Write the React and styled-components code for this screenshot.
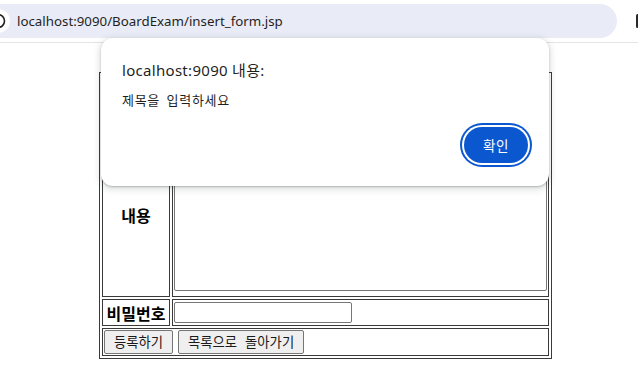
import React from "react";
import styled, { createGlobalStyle } from "styled-components";

const GlobalStyle = createGlobalStyle`
  body {
    margin: 0;
    background: #fff;
    font-family: "Noto Sans", "Noto Sans CJK KR", sans-serif;
    overflow: hidden;
  }
`;

const Shell = styled.div`
  position: relative;
  width: 638px;
  height: 385px;
  overflow: hidden;
`;

const Toolbar = styled.div`
  height: 42px;
  border-bottom: 1px solid #e2e4e8;
  display: flex;
  align-items: center;
  justify-content: space-between;
`;

const Omnibox = styled.div`
  margin-left: -22px;
  width: 639px;
  height: 34px;
  border-radius: 17px;
  background: #e9ecf6;
  display: flex;
  align-items: center;
  padding-left: 8px;
  box-sizing: border-box;
`;

const SiteChip = styled.div`
  width: 24px;
  height: 24px;
  border-radius: 50%;
  background: #fff;
  display: flex;
  align-items: center;
  justify-content: center;
  flex-shrink: 0;
`;

const Url = styled.span`
  margin-left: 7px;
  font-size: 13.3px;
  color: #1f1f1f;
  letter-spacing: 0;
  white-space: nowrap;
`;

const EdgeIcon = styled.div`
  width: 16px;
  height: 16px;
  margin-right: -13px;
  display: flex;
`;

const Page = styled.div`
  padding: 29px 0 0 99px;
`;

const FormTable = styled.div`
  display: grid;
  grid-template-columns: 68px 377px;
  grid-template-rows: 27px 27px 164px 27px 28px;
  gap: 2px;
  padding: 2px;
  width: max-content;
  border: 1px solid #3a3a3a;
  font-family: "Noto Sans CJK KR", sans-serif;
`;

const Cell = styled.div`
  box-sizing: border-box;
  border: 1px solid #3a3a3a;
  padding: 1px;
  display: flex;
  align-items: ${(p) => (p.$top ? "flex-start" : "center")};
  justify-content: ${(p) => (p.$label ? "center" : "flex-start")};
  grid-column: ${(p) => (p.$span ? "1 / span 2" : "auto")};
  gap: 5px;
  font-weight: ${(p) => (p.$label ? 700 : 400)};
  font-size: 16px;
  color: #000;
  white-space: nowrap;
`;

const TextInput = styled.input`
  box-sizing: border-box;
  width: 178px;
  height: 21px;
  border: 1px solid #767676;
  border-radius: 2px;
  padding: 1px 2px;
  background: #fff;
`;

const TextArea = styled.textarea`
  box-sizing: border-box;
  width: 374px;
  height: 156px;
  border: 1px solid #767676;
  border-radius: 2px;
  resize: none;
  margin: 0;
`;

const PlainButton = styled.button`
  box-sizing: border-box;
  height: 24px;
  padding: 0 9px;
  border: 1px solid #767676;
  border-radius: 2px;
  background: #efefef;
  color: #1a1a1a;
  font-family: "Noto Sans CJK KR", sans-serif;
  font-size: 13.33px;
  word-spacing: 5px;
  line-height: 1;
`;

const Dialog = styled.div`
  position: absolute;
  top: 38px;
  left: 101px;
  width: 448px;
  height: 148px;
  box-sizing: border-box;
  padding: 22px 21px 23px 21px;
  background: #fff;
  border-radius: 12px;
  box-shadow: 0 2px 6px 2px rgba(60, 64, 67, 0.15), 0 1px 2px rgba(60, 64, 67, 0.3);
  display: flex;
  flex-direction: column;
`;

const DialogTitle = styled.div`
  font-size: 15px;
  line-height: 20px;
  letter-spacing: 0.3px;
  color: #1f1f1f;
`;

const DialogMessage = styled.div`
  margin-top: 11px;
  font-family: "Noto Sans CJK KR", sans-serif;
  font-size: 13px;
  line-height: 18px;
  letter-spacing: 0.7px;
  word-spacing: 3px;
  color: #1f1f1f;
`;

const DialogFooter = styled.div`
  margin-top: auto;
  display: flex;
  justify-content: flex-end;
`;

const PrimaryButton = styled.button`
  width: 64px;
  height: 36px;
  border: none;
  border-radius: 18px;
  background: #0b57d0;
  color: #fff;
  font-family: "Noto Sans CJK KR", sans-serif;
  font-size: 13.5px;
  letter-spacing: 0.5px;
  box-shadow: 0 0 0 2px #fff, 0 0 0 4px #0b57d0;
`;

export default function App() {
  return (
    <Shell>
      <GlobalStyle />
      <Toolbar>
        <Omnibox>
          <SiteChip>
            <svg width="18" height="18" viewBox="0 0 18 18">
              <circle cx="9" cy="9" r="6.5" fill="none" stroke="#1f1f1f" strokeWidth="1.6" />
              <rect x="8.2" y="8" width="1.6" height="4.5" fill="#1f1f1f" />
              <rect x="8.2" y="5.4" width="1.6" height="1.6" fill="#1f1f1f" />
            </svg>
          </SiteChip>
          <Url>localhost:9090/BoardExam/insert_form.jsp</Url>
        </Omnibox>
        <EdgeIcon>
          <svg width="16" height="16" viewBox="0 0 16 16">
            <rect x="1" y="1" width="14" height="14" rx="1.5" fill="#2a2a2a" />
          </svg>
        </EdgeIcon>
      </Toolbar>

      <Page>
        <FormTable>
          <Cell $label />
          <Cell>
            <TextInput type="text" />
          </Cell>
          <Cell $label />
          <Cell>
            <TextInput type="text" />
          </Cell>
          <Cell $label>내용</Cell>
          <Cell $top>
            <TextArea />
          </Cell>
          <Cell $label>비밀번호</Cell>
          <Cell>
            <TextInput type="password" />
          </Cell>
          <Cell $span>
            <PlainButton>등록하기</PlainButton>
            <PlainButton>목록으로 돌아가기</PlainButton>
          </Cell>
        </FormTable>
      </Page>

      <Dialog>
        <DialogTitle>localhost:9090 내용:</DialogTitle>
        <DialogMessage>제목을 입력하세요</DialogMessage>
        <DialogFooter>
          <PrimaryButton>확인</PrimaryButton>
        </DialogFooter>
      </Dialog>
    </Shell>
  );
}
